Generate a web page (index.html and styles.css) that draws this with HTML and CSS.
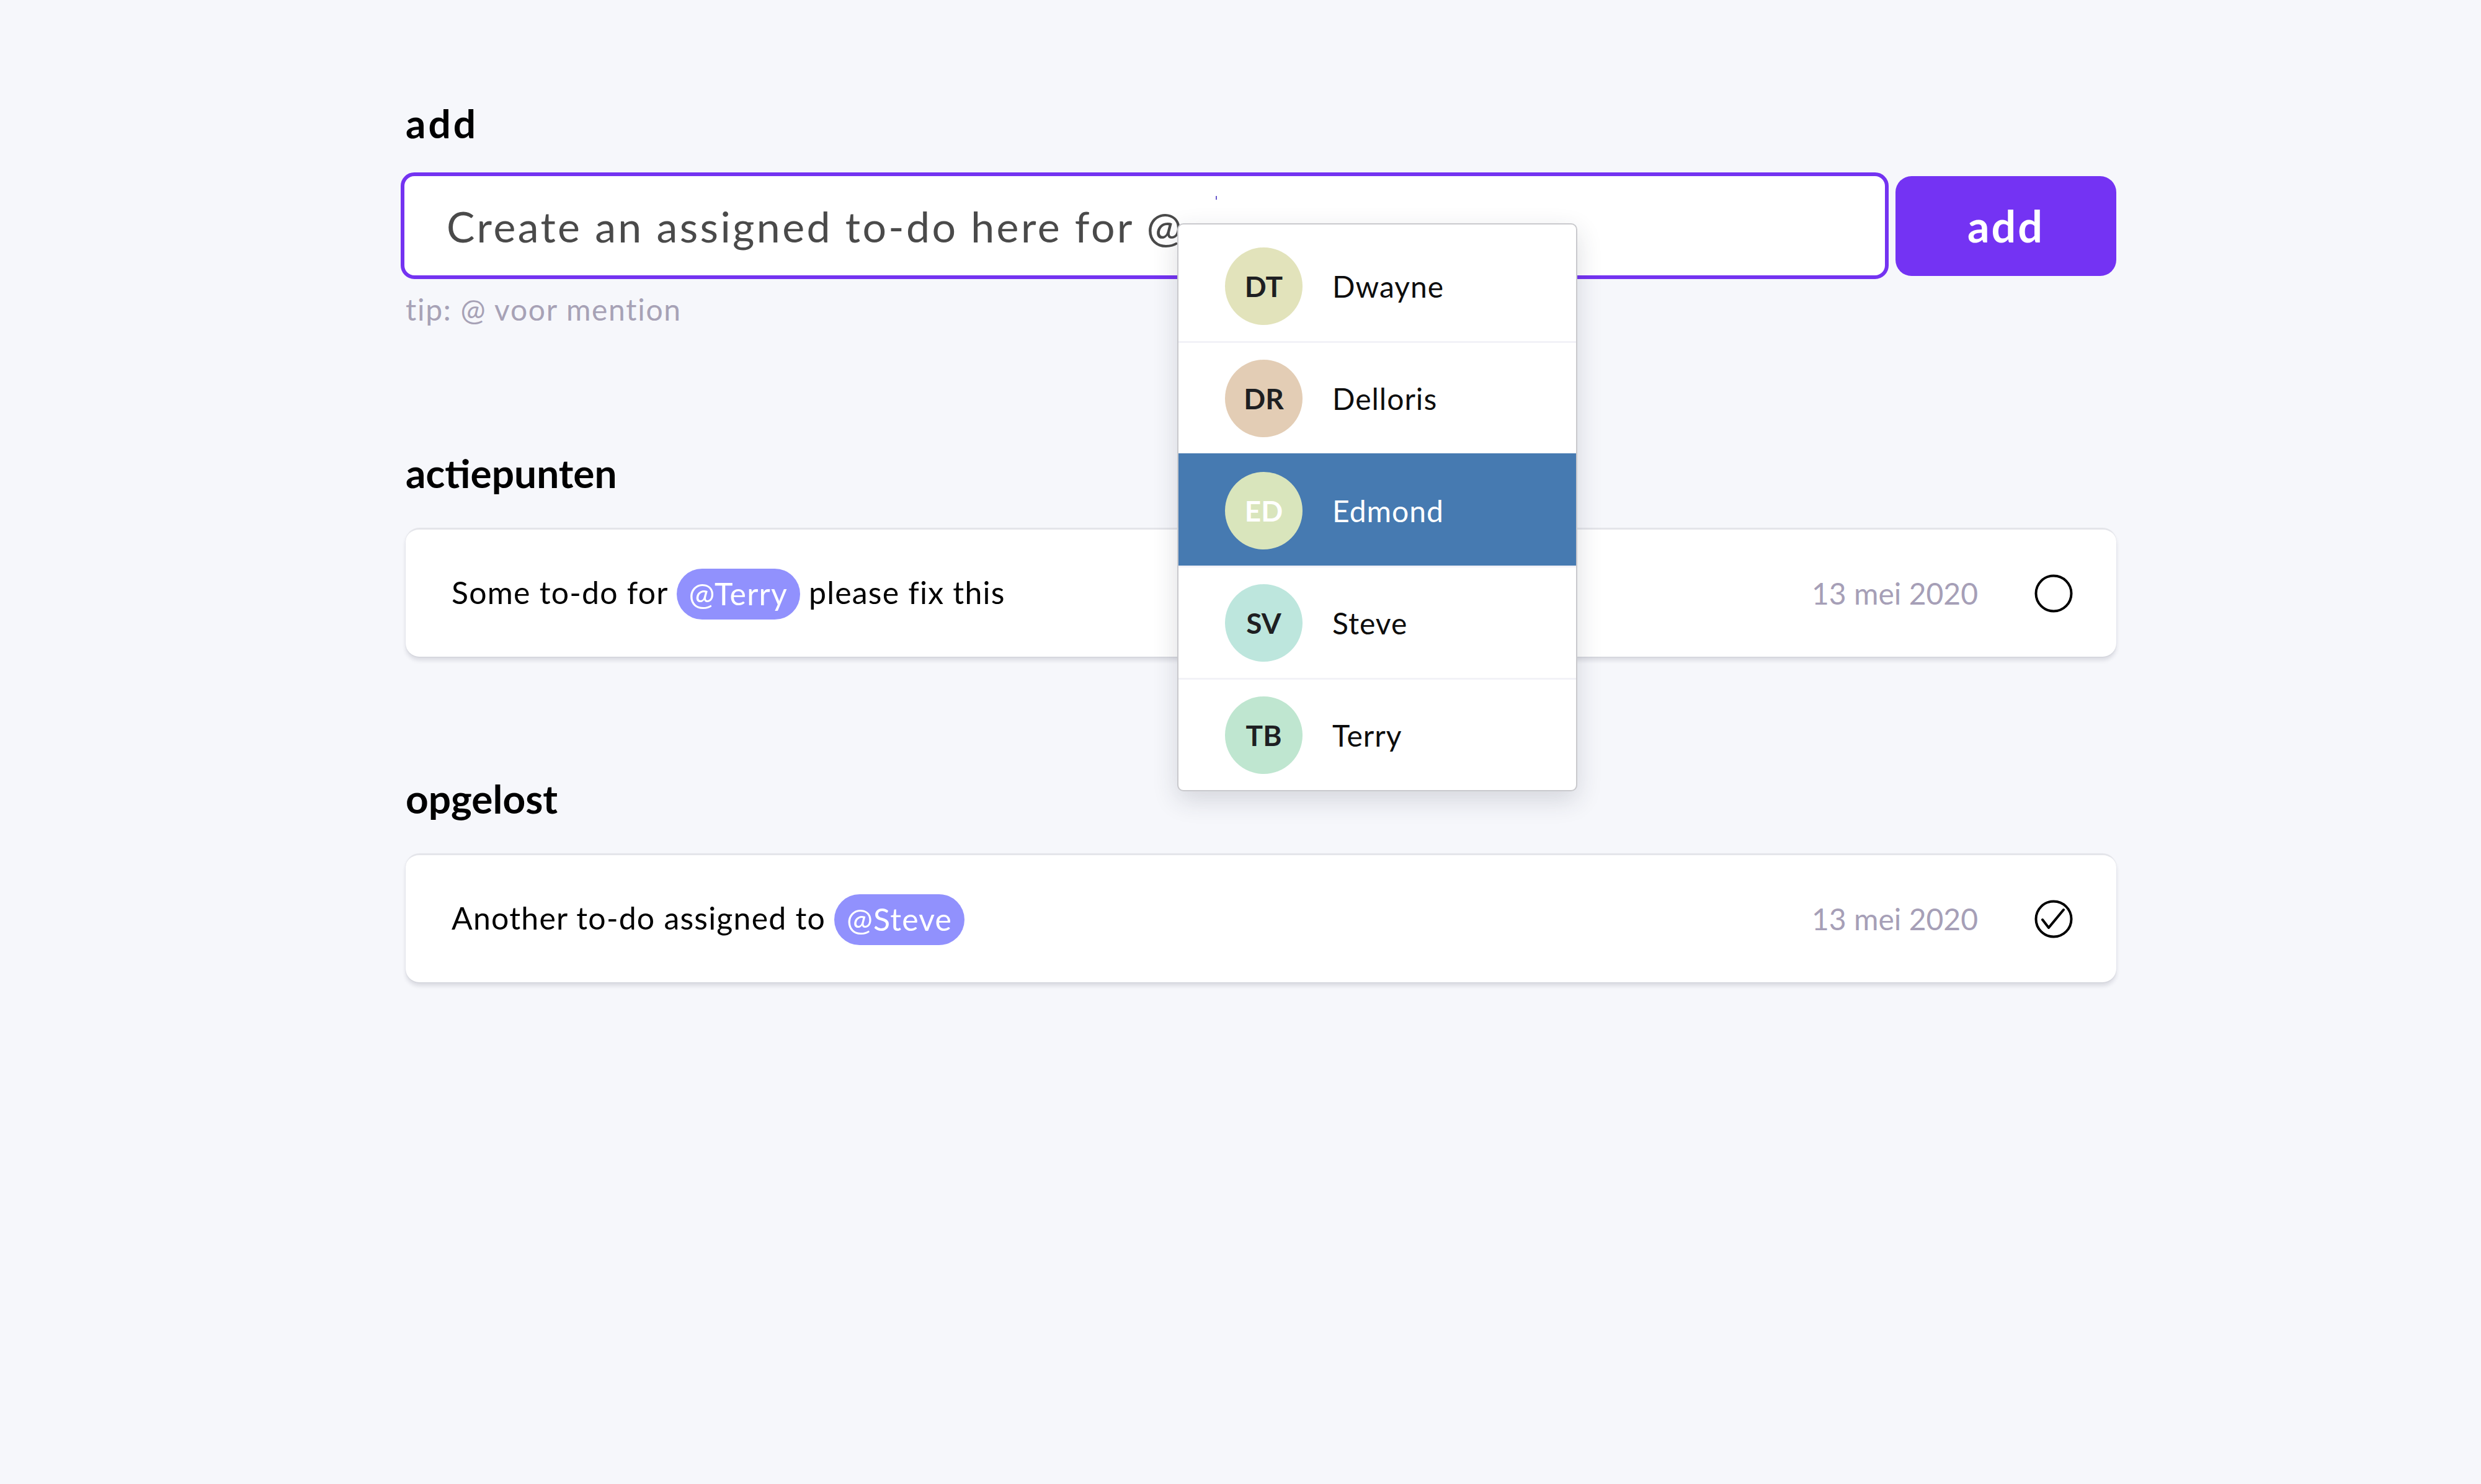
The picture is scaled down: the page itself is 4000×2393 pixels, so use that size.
FILE: index.html
```html
<!DOCTYPE html>
<html lang="nl">
<head>
<meta charset="utf-8">
<title>to-do</title>
<link rel="stylesheet" href="styles.css">
</head>
<body>
<main class="page">
  <section class="add-section">
    <h2 class="heading">add</h2>
    <div class="add-row">
      <div class="input-wrap">
        <input class="todo-input" type="text" placeholder="Create an assigned to-do here for @">
        <span class="caret"></span>
        <ul class="mentions">
          <li class="mention-item">
            <span class="avatar av-dt">DT</span>
            <span class="name">Dwayne</span>
          </li>
          <li class="mention-item">
            <span class="avatar av-dr">DR</span>
            <span class="name">Delloris</span>
          </li>
          <li class="mention-item active">
            <span class="avatar av-ed">ED</span>
            <span class="name">Edmond</span>
          </li>
          <li class="mention-item">
            <span class="avatar av-sv">SV</span>
            <span class="name">Steve</span>
          </li>
          <li class="mention-item">
            <span class="avatar av-tb">TB</span>
            <span class="name">Terry</span>
          </li>
        </ul>
      </div>
      <button class="add-btn" type="button">add</button>
    </div>
    <p class="tip">tip: @ voor mention</p>
  </section>

  <section class="list list-open">
    <h2 class="heading">actiepunten</h2>
    <div class="card">
      <p class="card-text">Some to-do for <span class="pill">@Terry</span> please fix this</p>
      <div class="card-meta">
        <span class="date">13 mei 2020</span>
        <svg class="status" viewBox="0 0 62 62" width="62" height="62">
          <circle cx="31" cy="31" r="28.5" fill="none" stroke="#000" stroke-width="4"/>
        </svg>
      </div>
    </div>
  </section>

  <section class="list list-done">
    <h2 class="heading">opgelost</h2>
    <div class="card">
      <p class="card-text">Another to-do assigned to <span class="pill">@Steve</span></p>
      <div class="card-meta">
        <span class="date">13 mei 2020</span>
        <svg class="status" viewBox="0 0 62 62" width="62" height="62">
          <circle cx="31" cy="31" r="28.5" fill="none" stroke="#000" stroke-width="4"/>
          <polyline points="13,32 23,45 47,16" fill="none" stroke="#000" stroke-width="4" stroke-linecap="round" stroke-linejoin="round"/>
        </svg>
      </div>
    </div>
  </section>
</main>
</body>
</html>
```

FILE: styles.css
```css
html, body {
  margin: 0;
  padding: 0;
  background: #f6f7fb;
  min-height: 100%;
}

body {
  font-family: "Lato", "Noto Sans", sans-serif;
  color: #000;
  min-height: 2393px;
}

.page {
  width: 2758px;
  margin-left: 654px;
  padding-top: 159px;
}

.heading {
  margin: 0;
  font-size: 64px;
  line-height: 80px;
  font-weight: 700;
  color: #000;
}

.add-section .heading {
  letter-spacing: 4px;
}

.add-row {
  display: flex;
  align-items: center;
  gap: 11px;
  margin-top: 39px;
  margin-left: -8px;
}

.input-wrap {
  position: relative;
  flex: 1;
}

.todo-input {
  display: block;
  box-sizing: border-box;
  width: 100%;
  height: 172px;
  margin: 0;
  padding: 0 0 0 68px;
  border: 6px solid #7433f1;
  border-radius: 22px;
  background: #fff;
  font-family: "Lato", "Noto Sans", sans-serif;
  font-size: 68px;
  letter-spacing: 3.4px;
  color: #4a4a4a;
  outline: none;
}

.todo-input::placeholder {
  color: #4a4a4a;
  opacity: 1;
}

.caret {
  position: absolute;
  left: 1314px;
  top: 38px;
  width: 2px;
  height: 6px;
  background: #6a5acd;
}

.add-btn {
  flex: 0 0 356px;
  height: 161px;
  border: none;
  border-radius: 26px;
  background: #7433f3;
  color: #fff;
  font-family: "Lato", "Noto Sans", sans-serif;
  font-size: 70px;
  letter-spacing: 3px;
  font-weight: 700;
  padding: 0;
  cursor: pointer;
}

.tip {
  margin: 21px 0 0;
  font-size: 48px;
  letter-spacing: 1.7px;
  line-height: 56px;
  color: #a7a2b6;
}

.mentions {
  position: absolute;
  left: 1252px;
  top: 82px;
  width: 641px;
  margin: 0;
  padding: 10px 0 0;
  list-style: none;
  background: #fff;
  border: 2px solid #c9c9cd;
  border-radius: 10px;
  box-shadow: 0 14px 40px rgba(40, 44, 60, 0.16);
  overflow: hidden;
  z-index: 5;
}

.mention-item {
  display: flex;
  align-items: center;
  gap: 48px;
  height: 178px;
  padding-left: 75px;
  border-top: 3px solid #f2f2f7;
}

.mention-item:first-child {
  border-top: none;
}

.mention-item.active {
  background: #467ab1;
  border-top-color: #467ab1;
}

.avatar {
  flex: 0 0 125px;
  width: 125px;
  height: 125px;
  border-radius: 50%;
  display: flex;
  align-items: center;
  justify-content: center;
  font-size: 46px;
  font-weight: 700;
  color: #1e1f22;
}

.av-dt { background: #e2e3bb; }
.av-dr { background: #e3cdb5; }
.av-ed { background: #d9e5bc; }
.av-sv { background: #bde6dd; }
.av-tb { background: #bfe6d0; }

.name {
  font-size: 48px;
  letter-spacing: 1px;
  color: #0d0d0d;
}

.mention-item.active .avatar,
.mention-item.active .name {
  color: #fff;
}

.list-open {
  margin-top: 196px;
}

.list-done {
  margin-top: 189px;
}

.card {
  display: flex;
  align-items: center;
  justify-content: space-between;
  box-sizing: border-box;
  height: 208px;
  margin-top: 48px;
  padding: 0 70px 0 74px;
  background: #fff;
  border-top: 3px solid #e4e5ea;
  border-radius: 22px;
  box-shadow: 0 6px 6px rgba(30, 35, 60, 0.12), 0 1px 2px rgba(30, 35, 60, 0.08);
}

.card-text {
  margin: 0;
  font-size: 50px;
  letter-spacing: 1.2px;
  line-height: 82px;
  color: #000;
}

.pill {
  display: inline-block;
  height: 82px;
  padding: 0 20px;
  border-radius: 41px;
  background: #9191fd;
  color: #fff;
  vertical-align: middle;
  line-height: 80px;
  margin-top: -6px;
}

.card-meta {
  display: flex;
  align-items: center;
  gap: 91px;
}

.date {
  font-size: 48px;
  color: #a69fb7;
}

.status {
  display: block;
}
```
